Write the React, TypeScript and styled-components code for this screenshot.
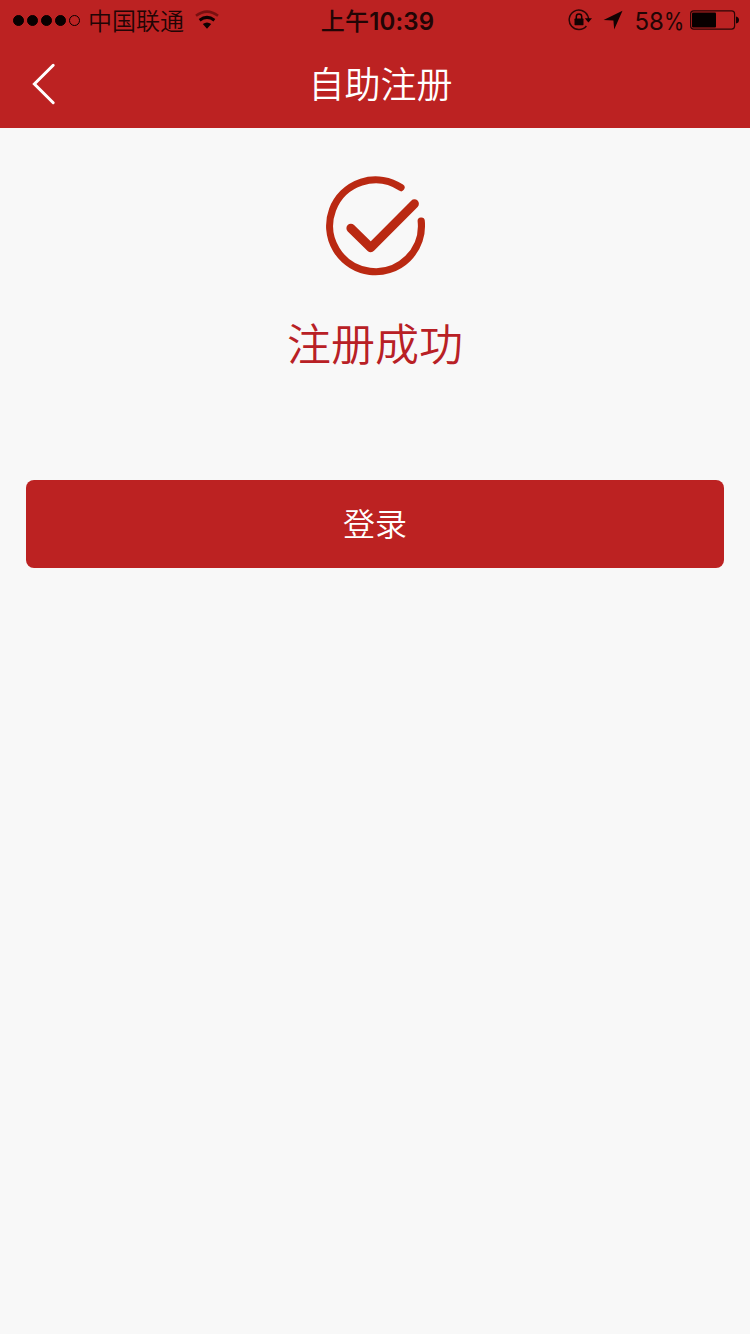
import React from "react";
import styled, { createGlobalStyle } from "styled-components";

const GlobalStyle = createGlobalStyle`
  * { box-sizing: border-box; }
  body {
    margin: 0;
    background: #f8f8f8;
    font-family: Inter, "Noto Sans CJK SC", sans-serif;
  }
`;

const Screen = styled.div`
  display: flex;
  flex-direction: column;
  width: 750px;
  height: 1334px;
  background: #f8f8f8;
`;

const Header = styled.header`
  height: 128px;
  background: #bc2222;
`;

const StatusBar = styled.div`
  display: grid;
  grid-template-columns: 1fr auto 1fr;
  align-items: center;
  height: 40px;
  padding: 0 11px 0 13px;
  color: #210505;
  font-size: 24px;
  line-height: 40px;
  white-space: nowrap;
`;

const Carrier = styled.div`
  display: flex;
  align-items: center;
`;

const CarrierName = styled.span`
  padding-top: 3px;
  font-weight: 350;
  line-height: 37px;
`;

const Signal = styled.div`
  display: flex;
  gap: 3px;
  margin-right: 8px;
`;

const Dot = styled.i<{ $empty?: boolean }>`
  width: 11px;
  height: 11px;
  border: 1px solid #080000;
  border-radius: 50%;
  background: ${(p) => (p.$empty ? "transparent" : "#080000")};
`;

const Time = styled.div`
  padding: 3px 0 0 4px;
  font-weight: 600;
  font-size: 24px;
  line-height: 37px;
  letter-spacing: 0.15px;
`;

const Meridiem = styled.span`
  margin-left: -1px;
  font-weight: 500;
`;

const Indicators = styled.div`
  display: flex;
  justify-content: flex-end;
  align-items: center;
`;

const Percent = styled.span`
  margin: 0 6px 0 12px;
  padding-top: 3px;
  font-size: 24px;
  line-height: 37px;
  letter-spacing: -0.2px;
`;

const PercentSign = styled.span`
  display: inline-block;
  transform: scaleX(0.86);
  transform-origin: left;
  margin-right: -3px;
`;

const Icon = styled.svg<{ $left?: number }>`
  display: block;
  flex: none;
  margin-left: ${(p) => p.$left ?? 0}px;
`;

const NavBar = styled.nav`
  display: grid;
  grid-template-columns: 100px 1fr 100px;
  align-items: center;
  height: 88px;
`;

const BackButton = styled.button`
  display: flex;
  align-items: center;
  height: 88px;
  padding: 0 0 0 30px;
  border: 0;
  background: transparent;
`;

const Title = styled.h1`
  margin: 0;
  padding: 2px 0 0 11px;
  color: #fff;
  font-size: 36px;
  font-weight: 350;
  line-height: 86px;
  text-align: center;
`;

const Content = styled.main`
  display: flex;
  flex-direction: column;
  align-items: center;
  padding: 46px 26px 0;
`;

const Message = styled.p`
  margin: 35px 0 0;
  color: #b82025;
  font-size: 44px;
  font-weight: 350;
  line-height: 64px;
`;

const LoginButton = styled.button`
  width: 100%;
  height: 88px;
  margin-top: 103px;
  padding: 2px 0 0;
  border: 0;
  border-radius: 8px;
  background: #bc2222;
  color: #fff;
  font-family: inherit;
  font-size: 32px;
  font-weight: 350;
  line-height: 86px;
`;

export default function App() {
  return (
    <Screen>
      <GlobalStyle />
      <Header>
        <StatusBar>
          <Carrier>
            <Signal>
              <Dot />
              <Dot />
              <Dot />
              <Dot />
              <Dot $empty />
            </Signal>
            <CarrierName>中国联通</CarrierName>
            <Icon $left={10} width="26" height="20" viewBox="0 0 26 20" fill="none">
              <path d="M2 5.8Q13-2.6 24 5.8" stroke="#791010" strokeWidth="2.6" />
              <path d="M5.6 10.2Q13 4.6 20.4 10.2" stroke="#0c0101" strokeWidth="3" />
              <path d="M8.8 14Q13 10.8 17.2 14L13 18.8Z" fill="#0c0101" />
            </Icon>
          </Carrier>
          <Time><Meridiem>上午</Meridiem>10:39</Time>
          <Indicators>
            <Icon width="24" height="22" viewBox="0 0 24 22" fill="none">
              <path d="M19.8 7A9.7 9.7 0 1 0 18.4 17" stroke="#2b0606" strokeWidth="1.5" />
              <path d="M19.8 7Q20.5 8.5 20.5 10" stroke="#2b0606" strokeWidth="1.5" />
              <path d="M16.8 9.2H24L20.4 13.4Z" fill="#120202" />
              <rect x="6.5" y="9.6" width="9" height="6.6" rx="0.6" fill="#120202" />
              <path d="M8.3 10V7.6a2.7 2.7 0 0 1 5.4 0V10" stroke="#120202" strokeWidth="1.5" />
            </Icon>
            <Icon $left={11} width="20" height="20" viewBox="0 0 20 20">
              <path d="M19.5 0.8L11.2 19.6L10.4 10.4L0.6 9.9Z" fill="#120202" />
            </Icon>
            <Percent>58<PercentSign>%</PercentSign></Percent>
            <Icon width="49" height="20" viewBox="0 0 49 20">
              <rect x="0.6" y="0.9" width="44" height="18.2" rx="3" fill="none" stroke="#2b0606" strokeWidth="1.2" />
              <rect x="2" y="2.5" width="24" height="15" rx="1" fill="#080000" />
              <path d="M46 6.5Q49 7 49 10T46 13.5Z" fill="#120202" />
            </Icon>
          </Indicators>
        </StatusBar>
        <NavBar>
          <BackButton aria-label="返回">
            <Icon width="28" height="42" viewBox="0 0 28 42" fill="none">
              <path d="M23.2 2.3L4.4 21L23.2 39.7" stroke="#fff" strokeWidth="3" strokeLinecap="round" />
            </Icon>
          </BackButton>
          <Title>自助注册</Title>
        </NavBar>
      </Header>
      <Content>
        <Icon width="104" height="104" viewBox="323 174 104 104" fill="none" stroke="#ba2912" strokeLinecap="round" strokeLinejoin="round">
          <path d="M401 187.6A45.9 45.9 0 1 0 421.2 221" strokeWidth="7.2" />
          <path d="M350.9 228.2L370.8 247.7L414.4 203.8" strokeWidth="9" />
        </Icon>
        <Message>注册成功</Message>
        <LoginButton>登录</LoginButton>
      </Content>
    </Screen>
  );
}
